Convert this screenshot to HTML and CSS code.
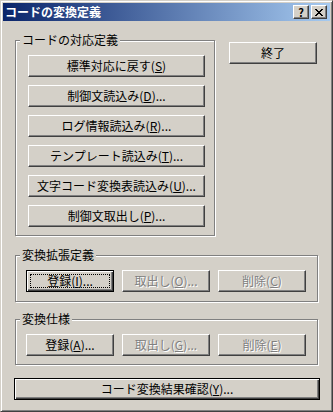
FILE: index.html
```html
<!DOCTYPE html>
<html lang="ja">
<head>
  <meta charset="UTF-8">
  <title>コードの変換定義</title>
  <link rel="stylesheet" href="styles.css">
</head>
<body>
  <div class="window">
    <!-- Title bar -->
    <div class="titlebar">
      <span class="title">コードの変換定義</span>
      <div class="title-buttons">
        <span class="tbtn tbtn-help">?</span>
        <span class="tbtn">
          <svg width="8" height="7" viewBox="0 0 8 7"><path d="M0 0h2v1h1v1h2V1h1V0h2v1H7v1H6v1H5v1h1v1h1v1h1v1H6V6H5V5H3v1H2v1H0V6h1V5h1V4h1V3H2V2H1V1H0z" fill="#000"/></svg>
        </span>
      </div>
    </div>

    <div class="client">
      <div class="top-row">
        <!-- Code mapping group -->
        <div class="group group-map">
          <span class="caption">コードの対応定義</span>
          <div class="stack">
            <button class="btn">標準対応に戻す(<u>S</u>)</button>
            <button class="btn">制御文読込み(<u>D</u>)...</button>
            <button class="btn">ログ情報読込み(<u>R</u>)...</button>
            <button class="btn">テンプレート読込み(<u>T</u>)...</button>
            <button class="btn">文字コード変換表読込み(<u>U</u>)...</button>
            <button class="btn">制御文取出し(<u>P</u>)...</button>
          </div>
        </div>
        <button class="btn btn-close">終了</button>
      </div>

      <!-- Extension definition group -->
      <div class="group group-ext">
        <span class="caption">変換拡張定義</span>
        <div class="row">
          <button class="btn btn-small btn-focus">登録(<u>I</u>)...</button>
          <button class="btn btn-small" disabled>取出し(<u>O</u>)...</button>
          <button class="btn btn-small" disabled>削除(<u>C</u>)</button>
        </div>
      </div>

      <!-- Conversion spec group -->
      <div class="group group-spec">
        <span class="caption">変換仕様</span>
        <div class="row">
          <button class="btn btn-small">登録(<u>A</u>)...</button>
          <button class="btn btn-small" disabled>取出し(<u>G</u>)...</button>
          <button class="btn btn-small" disabled>削除(<u>E</u>)</button>
        </div>
      </div>

      <button class="btn btn-default btn-wide">コード変換結果確認(<u>Y</u>)...</button>
    </div>
  </div>
</body>
</html>
```

FILE: styles.css
```css
body {
  margin: 0;
  font-family: "Noto Sans CJK JP", "Noto Sans", sans-serif;
  font-size: 12px;
  background: #d4d0c8;
}

.window {
  width: 333px;
  height: 412px;
  box-sizing: border-box;
  border: 1px solid;
  border-color: #d4d0c8 #404040 #404040 #d4d0c8;
  box-shadow: inset 1px 1px #fff, inset -1px -1px #808080;
  padding: 2px;
  background: #d4d0c8;
}

/* Title bar */
.titlebar {
  height: 18px;
  display: flex;
  align-items: center;
  justify-content: space-between;
  background: linear-gradient(to right, #0a246a, #a6caf0);
}

.title {
  color: #fff;
  font-weight: bold;
  font-size: 12px;
  line-height: 18px;
  padding-left: 2px;
}

.title-buttons {
  display: flex;
  gap: 2px;
  margin-right: 3px;
}

.tbtn {
  width: 16px;
  height: 14px;
  box-sizing: border-box;
  display: flex;
  align-items: center;
  justify-content: center;
  background: #d4d0c8;
  border: 1px solid;
  border-color: #fff #404040 #404040 #fff;
  box-shadow: inset -1px -1px #808080;
  font-weight: bold;
  font-size: 11px;
  line-height: 12px;
  color: #000;
}

.tbtn svg {
  display: block;
}

/* Client area */
.client {
  padding-left: 12px;
}

.top-row {
  display: flex;
  align-items: flex-start;
}

/* Etched group box */
.group {
  position: relative;
  box-sizing: border-box;
  border: 1px solid #808080;
  box-shadow: inset 1px 1px #fff, 1px 1px #fff;
}

.caption {
  position: absolute;
  top: -7px;
  left: 4px;
  padding: 0 2px;
  line-height: 12px;
  background: #d4d0c8;
  color: #000;
}

.group-map {
  width: 200px;
  height: 196px;
  margin-top: 19px;
  padding: 14px 0 0 12px;
}

.stack {
  display: flex;
  flex-direction: column;
  gap: 8px;
}

.group-ext {
  width: 303px;
  height: 47px;
  margin-top: 19px;
  padding: 14px 0 0 10px;
}

.group-spec {
  width: 303px;
  height: 46px;
  margin-top: 17px;
  padding: 14px 0 0 10px;
}

.row {
  display: flex;
  gap: 8px;
}

/* Push buttons */
.btn {
  position: relative;
  box-sizing: border-box;
  height: 22px;
  width: 177px;
  padding: 0;
  margin: 0;
  font-family: "Noto Sans CJK JP", "Noto Sans", sans-serif;
  font-size: 12px;
  line-height: 20px;
  color: #000;
  background: #d4d0c8;
  border: 1px solid;
  border-color: #fff #404040 #404040 #fff;
  box-shadow: inset -1px -1px #808080;
  border-radius: 0;
}

.btn:disabled {
  color: #808080;
  text-shadow: 1px 1px #fff;
}

.btn-close {
  width: 88px;
  margin: 21px 0 0 14px;
}

.btn-small {
  width: 88px;
}

.btn-focus {
  border-color: #000;
  box-shadow: inset 1px 1px #fff, inset -1px -1px #404040, inset -2px -2px #808080;
}

.btn-focus::after {
  content: "";
  position: absolute;
  inset: 3px;
  border: 1px dotted #000;
}

.btn-default {
  border-color: #000;
  box-shadow: inset 1px 1px #fff, inset -1px -1px #404040, inset -2px -2px #808080;
}

.btn-wide {
  display: block;
  width: 306px;
  margin: 13px 0 0 -1px;
}
```
